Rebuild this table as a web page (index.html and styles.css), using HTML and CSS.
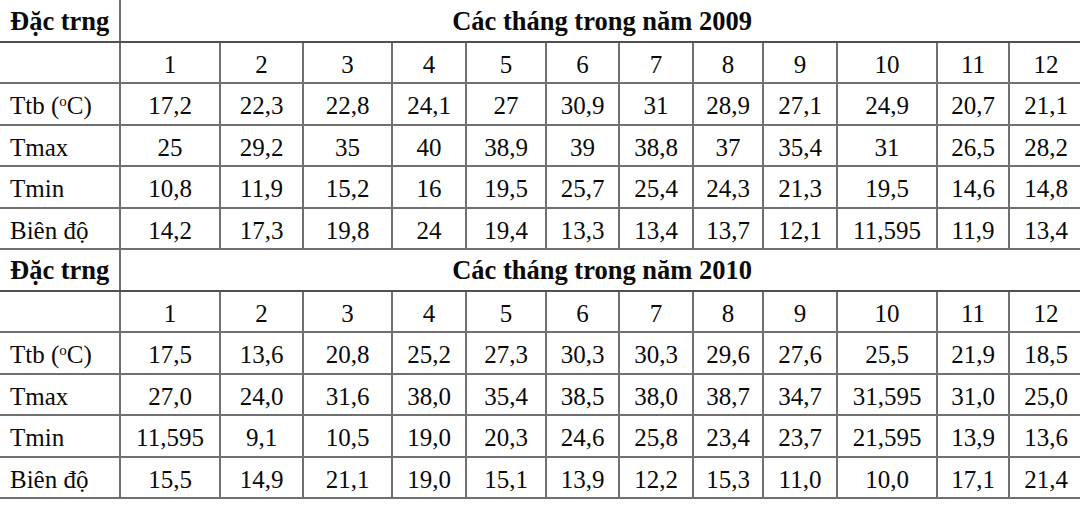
FILE: index.html
```html
<!DOCTYPE html>
<html lang="vi">
<head>
  <meta charset="UTF-8" />
  <title>Đặc trưng nhiệt độ 2009 - 2010</title>
  <link rel="stylesheet" href="styles.css">
</head>
<body>

  <table class="temp-table">
    <colgroup>
      <col class="c-label">
      <col style="width:100px"><col style="width:83px"><col style="width:89px">
      <col style="width:74px"><col style="width:80px"><col style="width:73px">
      <col style="width:74px"><col style="width:70px"><col style="width:74px">
      <col style="width:100px"><col style="width:72px"><col style="width:74px">
    </colgroup>

    <tbody class="year first">
      <tr class="head">
        <th class="label">Đặc trng</th>
        <th colspan="12">Các tháng trong năm 2009</th>
      </tr>
      <tr>
        <td class="label"></td>
        <td>1</td><td>2</td><td>3</td><td>4</td><td>5</td><td>6</td>
        <td>7</td><td>8</td><td>9</td><td>10</td><td>11</td><td>12</td>
      </tr>
      <tr>
        <td class="label">Ttb (<sup>o</sup>C)</td>
        <td>17,2</td><td>22,3</td><td>22,8</td><td>24,1</td><td>27</td><td>30,9</td>
        <td>31</td><td>28,9</td><td>27,1</td><td>24,9</td><td>20,7</td><td>21,1</td>
      </tr>
      <tr>
        <td class="label">Tmax</td>
        <td>25</td><td>29,2</td><td>35</td><td>40</td><td>38,9</td><td>39</td>
        <td>38,8</td><td>37</td><td>35,4</td><td>31</td><td>26,5</td><td>28,2</td>
      </tr>
      <tr>
        <td class="label">Tmin</td>
        <td>10,8</td><td>11,9</td><td>15,2</td><td>16</td><td>19,5</td><td>25,7</td>
        <td>25,4</td><td>24,3</td><td>21,3</td><td>19,5</td><td>14,6</td><td>14,8</td>
      </tr>
      <tr>
        <td class="label">Biên độ</td>
        <td>14,2</td><td>17,3</td><td>19,8</td><td>24</td><td>19,4</td><td>13,3</td>
        <td>13,4</td><td>13,7</td><td>12,1</td><td>11,595</td><td>11,9</td><td>13,4</td>
      </tr>
    </tbody>

    <tbody class="year">
      <tr class="head">
        <th class="label">Đặc trng</th>
        <th colspan="12">Các tháng trong năm 2010</th>
      </tr>
      <tr>
        <td class="label"></td>
        <td>1</td><td>2</td><td>3</td><td>4</td><td>5</td><td>6</td>
        <td>7</td><td>8</td><td>9</td><td>10</td><td>11</td><td>12</td>
      </tr>
      <tr>
        <td class="label">Ttb (<sup>o</sup>C)</td>
        <td>17,5</td><td>13,6</td><td>20,8</td><td>25,2</td><td>27,3</td><td>30,3</td>
        <td>30,3</td><td>29,6</td><td>27,6</td><td>25,5</td><td>21,9</td><td>18,5</td>
      </tr>
      <tr>
        <td class="label">Tmax</td>
        <td>27,0</td><td>24,0</td><td>31,6</td><td>38,0</td><td>35,4</td><td>38,5</td>
        <td>38,0</td><td>38,7</td><td>34,7</td><td>31,595</td><td>31,0</td><td>25,0</td>
      </tr>
      <tr>
        <td class="label">Tmin</td>
        <td>11,595</td><td>9,1</td><td>10,5</td><td>19,0</td><td>20,3</td><td>24,6</td>
        <td>25,8</td><td>23,4</td><td>23,7</td><td>21,595</td><td>13,9</td><td>13,6</td>
      </tr>
      <tr>
        <td class="label">Biên độ</td>
        <td>15,5</td><td>14,9</td><td>21,1</td><td>19,0</td><td>15,1</td><td>13,9</td>
        <td>12,2</td><td>15,3</td><td>11,0</td><td>10,0</td><td>17,1</td><td>21,4</td>
      </tr>
    </tbody>
  </table>

</body>
</html>
```

FILE: styles.css
```css
html, body {
  margin: 0;
  padding: 0;
  background: #fff;
  overflow: hidden;
}
body {
  font-family: "Liberation Serif", "Times New Roman", serif;
  color: #0a0a0a;
}
.temp-table {
  width: 1083px;
  table-layout: fixed;
  border-collapse: collapse;
  font-size: 25px;
}
.c-label {
  width: 120px;
}
.temp-table td,
.temp-table th {
  height: 41.5px;
  padding: 5px 0 0;
  border: 2px solid #707070;
  text-align: center;
  vertical-align: middle;
  box-sizing: border-box;
  white-space: nowrap;
}
.temp-table th {
  padding-top: 2px;
  font-size: 26.5px;
  font-weight: bold;
  border-top: none;
  border-left: none;
  border-right: none;
}
.temp-table th.label {
  border-right: 2px solid #707070;
}
.temp-table .head th {
  border-bottom: 2px solid #505050;
}
.temp-table .label {
  text-align: left;
  padding-left: 10px;
  border-left: none;
}
.temp-table sup {
  font-size: 15px;
  vertical-align: 8px;
  line-height: 0;
}
```
